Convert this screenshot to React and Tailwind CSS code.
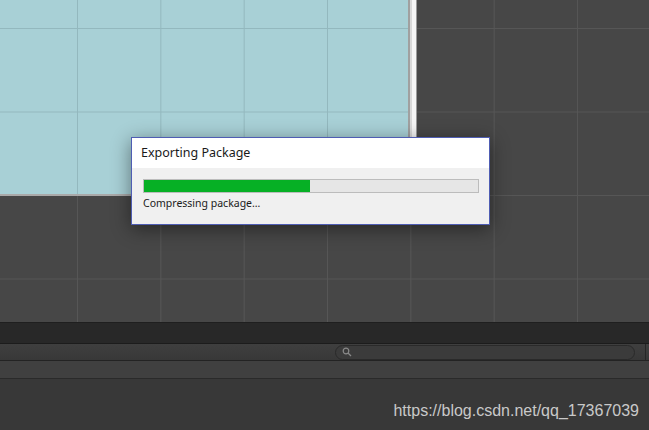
// App.jsx — editor scene with an "Exporting Package" progress dialog
export default function App() {
  return (
    <div className="w-[649px] h-[430px] overflow-hidden flex flex-col bg-[#383838] font-['Noto_Sans',sans-serif]">
      {/* Scene view */}
      <div className="relative h-[322px] shrink-0 bg-[#474747] bg-[linear-gradient(to_right,#565656_1px,transparent_1px),linear-gradient(to_bottom,#565656_1px,transparent_1px)] bg-[size:83.33px_83.5px] bg-[position:77px_28px]">
        <div className="flex h-[196px] w-[417px]">
          {/* Blue game panel */}
          <div className="w-[408px] h-full flex flex-col">
            <div className="flex-1 bg-[#a8d0d6] bg-[linear-gradient(to_right,#93b8be_1px,transparent_1px),linear-gradient(to_bottom,#93b8be_1px,transparent_1px)] bg-[size:83.33px_83.5px] bg-[position:77px_28px]" />
            <div className="h-[2px] bg-[#a9a9a9]" />
          </div>
          {/* Right frame */}
          <div className="w-[2px] bg-[#a0a0a0]" />
          <div className="w-[2px] bg-[#d8d8d8]" />
          <div className="w-[4px] bg-[#f5f5f5]" />
          <div className="w-[1px] bg-[#9a9a9a]" />
        </div>

        {/* Export dialog */}
        <div className="absolute left-[131px] top-[137px] w-[359px] h-[88px] border border-[#4f5db3] bg-[#f0f0f0] shadow-[0_4px_18px_rgba(0,0,0,0.45)] flex flex-col">
          <div className="h-[30px] bg-white flex items-center pl-[9px] text-[12.5px] text-[#1a1a1a] shrink-0">
            Exporting Package
          </div>
          <div className="pl-[11px] pt-[11px]">
            <div className="w-[336px] h-[14px] border border-[#bcbcbc] bg-[#e6e6e6]">
              <div className="h-full w-[166px] bg-[#06b025]" />
            </div>
            <div className="mt-[3px] text-[10.5px] leading-[14px] text-[#1a1a1a]">Compressing package…</div>
          </div>
        </div>
      </div>

      {/* Lower panels */}
      <div className="h-px bg-[#1f1f1f]" />
      <div className="h-[20px] bg-[#282828]" />
      <div className="h-px bg-[#1c1c1c]" />
      <div className="h-[16px] bg-[linear-gradient(to_bottom,#3f3f3f,#383838)] flex items-center relative">
        <div className="ml-[335px] w-[300px] h-[15px] rounded-full border border-[#2a2a2a] bg-[#3b3b3b] flex items-center pl-[6px]">
          <svg width="10" height="10" viewBox="0 0 10 10" fill="none" stroke="#8a8a8a" strokeWidth="1.2">
            <circle cx="4" cy="4" r="2.8" />
            <path d="M6 6l3 3" />
          </svg>
        </div>
        <div className="ml-[10px] w-px h-full bg-[#262626]" />
      </div>
      <div className="h-px bg-[#232323]" />
      <div className="h-[17px] bg-[#404040]" />
      <div className="h-px bg-[#2a2a2a]" />
      <div className="flex-1 flex items-end justify-end pr-[10px] pb-[10px]">
        <span className="font-['Liberation_Sans',Arial,sans-serif] text-[16px] leading-[18px] text-[#c9c9c9]">
          https://blog.csdn.net/qq_17367039
        </span>
      </div>
    </div>
  );
}
